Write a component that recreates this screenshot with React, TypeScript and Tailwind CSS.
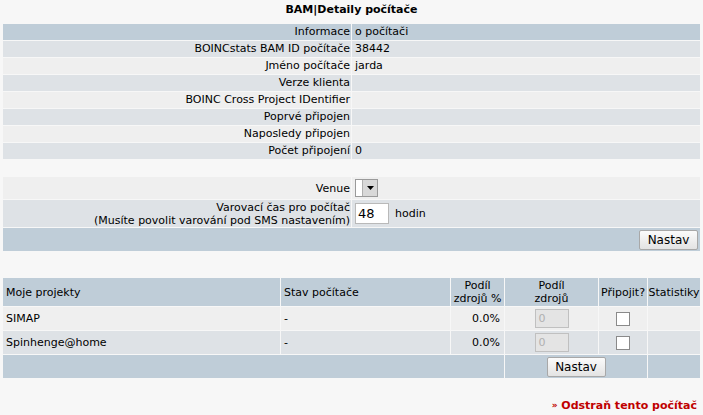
import React from 'react';

const infoRows: [string, string][] = [
  ['BOINCstats BAM ID počítače', '38442'],
  ['Jméno počítače', 'jarda'],
  ['Verze klienta', ''],
  ['BOINC Cross Project IDentifier', ''],
  ['Poprvé připojen', ''],
  ['Naposledy připojen', ''],
  ['Počet připojení', '0'],
];

const projects = [
  { name: 'SIMAP', state: '-', share: '0.0%' },
  { name: 'Spinhenge@home', state: '-', share: '0.0%' },
];

const dark = 'bg-[#dee2e6]';
const light = 'bg-[#efefef]';
const head = 'bg-[#bfcdd8]';

function NastavButton() {
  return (
    <button className="h-[20px] w-[59px] text-[12px] leading-none text-black border border-[#a8a8a8] rounded-[2px] bg-gradient-to-b from-[#fbfbfb] to-[#e3e3e3]">
      Nastav
    </button>
  );
}

export default function App() {
  return (
    <div
      className="w-[703px] h-[415px] bg-[#f7f7f7] text-[11px] text-black px-[2px] overflow-hidden"
      style={{ fontFamily: '"DejaVu Sans", Verdana, sans-serif' }}
    >
      <div className="h-[23px] pt-[3px] text-center font-bold leading-[14px]">BAM|Detaily počítače</div>

      <table className="w-[699px] table-fixed border-separate border-spacing-px leading-[16px]">
        <colgroup>
          <col className="w-[348px]" />
          <col />
        </colgroup>
        <tbody>
          <tr className={head}>
            <td className="text-right pr-[1px] h-[16px]">Informace</td>
            <td className="pl-[3px]">o počítači</td>
          </tr>
          {infoRows.map(([label, value], i) => (
            <tr key={label} className={i % 2 === 0 ? dark : light}>
              <td className="text-right pr-[1px] h-[16px]">{label}</td>
              <td className="pl-[3px]">{value}</td>
            </tr>
          ))}
        </tbody>
      </table>

      <table className="mt-[16px] w-[699px] table-fixed border-separate border-spacing-px leading-[13px]">
        <colgroup>
          <col className="w-[348px]" />
          <col />
        </colgroup>
        <tbody>
          <tr className={light}>
            <td className="text-right pr-[1px] h-[22px]">Venue</td>
            <td className="pl-[3px]">
              <div className="flex h-[18px] w-[23px] border border-[#9a9a9a] bg-white">
                <div className="w-[6px]" />
                <div className="flex-1 flex items-center justify-center bg-[#d8d8d8] border-l border-[#b0b0b0]">
                  <svg width="7" height="4" viewBox="0 0 7 4">
                    <path d="M0 0h7L3.5 4z" fill="#000" />
                  </svg>
                </div>
              </div>
            </td>
          </tr>
          <tr className={dark}>
            <td className="text-right pr-[1px] h-[27px]">
              Varovací čas pro počítač
              <br />
              (Musíte povolit varování pod SMS nastavením)
            </td>
            <td className="pl-[3px]">
              <div className="flex items-center gap-[6px]">
                <div className="w-[34px] h-[21px] bg-white border border-[#b9b9b9] pl-[2px] text-[13px] leading-[19px]">48</div>
                <span>hodin</span>
              </div>
            </td>
          </tr>
          <tr className={head}>
            <td colSpan={2} className="h-[23px] text-right pr-[2px]">
              <NastavButton />
            </td>
          </tr>
        </tbody>
      </table>

      <table className="mt-[25px] w-[699px] table-fixed border-separate border-spacing-px leading-[13px]">
        <colgroup>
          <col className="w-[277px]" />
          <col className="w-[169px]" />
          <col className="w-[53px]" />
          <col className="w-[93px]" />
          <col className="w-[48px]" />
          <col />
        </colgroup>
        <tbody>
          <tr className={head}>
            <td className="h-[28px] pl-[3px]">Moje projekty</td>
            <td className="pl-[3px]">Stav počítače</td>
            <td className="text-center">Podíl<br />zdrojů %</td>
            <td className="text-center">Podíl<br />zdrojů</td>
            <td className="text-center">Připojit?</td>
            <td className="text-center">Statistiky</td>
          </tr>
          {projects.map((p, i) => (
            <tr key={p.name} className={i % 2 === 0 ? light : dark}>
              <td className="h-[23px] pl-[3px]">{p.name}</td>
              <td className="pl-[3px]">{p.state}</td>
              <td className="text-right pr-[4px]">{p.share}</td>
              <td>
                <div className="mx-auto w-[34px] h-[19px] border border-[#c0c0c0] bg-[#e4e4e4] text-[#b0b0b0] pl-[3px] leading-[17px]">0</div>
              </td>
              <td>
                <div className="mx-auto w-[14px] h-[14px] border border-[#8a8a8a] bg-white" />
              </td>
              <td />
            </tr>
          ))}
          <tr className={head}>
            <td colSpan={3} className="h-[23px]" />
            <td colSpan={2} className="text-center">
              <NastavButton />
            </td>
            <td />
          </tr>
        </tbody>
      </table>

      <div className="mt-[19px] text-right pr-[4px] font-bold text-[#c00000]">
        <span className="text-[9px] align-[1px]">»</span> Odstraň tento počítač
      </div>
    </div>
  );
}
